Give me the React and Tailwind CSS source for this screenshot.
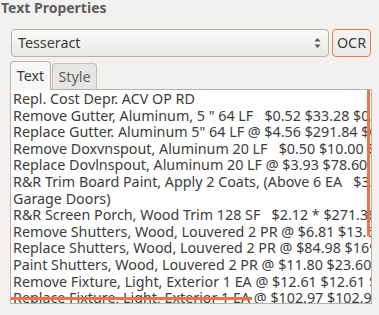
import React from 'react';

const lines = [
  'Repl. Cost Depr. ACV OP RD',
  'Remove Gutter, Aluminum, 5 " 64 LF   $0.52 $33.28 $0.00 $33.28',
  'Replace Gutter. Aluminum 5" 64 LF @ $4.56 $291.84 $0.00 $291.84',
  'Remove Doxvnspout, Aluminum 20 LF   $0.50 $10.00 $0.00',
  'Replace Dovlnspout, Aluminum 20 LF @ $3.93 $78.60 $0.00',
  'R&R Trim Board Paint, Apply 2 Coats, (Above 6 EA   $3.50 $21.00',
  'Garage Doors)',
  'R&R Screen Porch, Wood Trim 128 SF   $2.12 * $271.36 $0.00',
  'Remove Shutters, Wood, Louvered 2 PR @ $6.81 $13.62 $0.00',
  'Replace Shutters, Wood, Louvered 2 PR @ $84.98 $169.96 $0.00',
  'Paint Shutters, Wood, Louvered 2 PR @ $11.80 $23.60 $0.00',
  'Remove Fixture, Light, Exterior 1 EA @ $12.61 $12.61 $0.00',
  'Replace Fixture, Light, Exterior 1 EA @ $102.97 $102.97 $0.00',
];

export default function App() {
  return (
    <div className="w-[379px] h-[315px] overflow-hidden bg-[#f2f1f0] text-[#3c3c3c] font-['Noto_Sans',sans-serif]">
      {/* Titre */}
      <div className="h-[29px] text-[14px] leading-[16px] font-bold text-[#5e5e5e] pl-px">
        Text Properties
      </div>

      {/* Moteur + bouton */}
      <div className="flex items-stretch h-[28px] pl-[11px] gap-[3px]">
        <div className="w-[318px] flex items-center justify-between rounded-[4px] border border-[#b6b2ab] bg-gradient-to-b from-[#fafaf9] to-[#e8e7e5] pl-[6px] pr-[7px] text-[14.3px]">
          <span>Tesseract</span>
          <svg width="7" height="12" viewBox="0 0 7 12" className="text-[#5a5a5a]">
            <path d="M3.5 1 L6.5 4.5 L0.5 4.5 Z" fill="currentColor" />
            <path d="M3.5 11 L6.5 7.5 L0.5 7.5 Z" fill="currentColor" />
          </svg>
        </div>
        <button className="w-[39px] rounded-[4px] border border-[#f07746] bg-gradient-to-b from-[#f6f5f4] to-[#ebeae8] text-[14.3px] text-[#3c3c3c] flex items-center justify-center">
          OCR
        </button>
      </div>

      {/* Onglets */}
      <div className="flex items-end h-[30px] pl-[10px] mt-[2px]">
        <div className="relative z-10 -mb-px w-[41px] h-[29px] border border-b-0 border-[#b6b2ab] rounded-t-[4px] bg-[#f7f7f6] text-[14.3px] flex items-center justify-center">
          Text
        </div>
        <div className="ml-px w-[45px] h-[26px] border border-b-0 border-[#c4c0ba] rounded-t-[4px] bg-[#e6e5e3] text-[14.3px] text-[#5e5e5e] flex items-center justify-center">
          Style
        </div>
      </div>

      {/* Zone de texte */}
      <div className="relative ml-[10px] w-[362px] h-[215px] border border-[#b6b2ab] bg-white overflow-hidden">
        <div className="pl-[2px] pt-px text-[14.3px] leading-[16.6px] whitespace-pre">
          {lines.map((l, i) => (
            <div key={i}>{l}</div>
          ))}
        </div>
        <div className="absolute right-[1px] top-0 w-[3px] h-[146px] bg-[#ef7443]" />
        <div className="absolute left-0 bottom-[3px] w-[241px] h-[3px] bg-[#ef7443]" />
      </div>
    </div>
  );
}
